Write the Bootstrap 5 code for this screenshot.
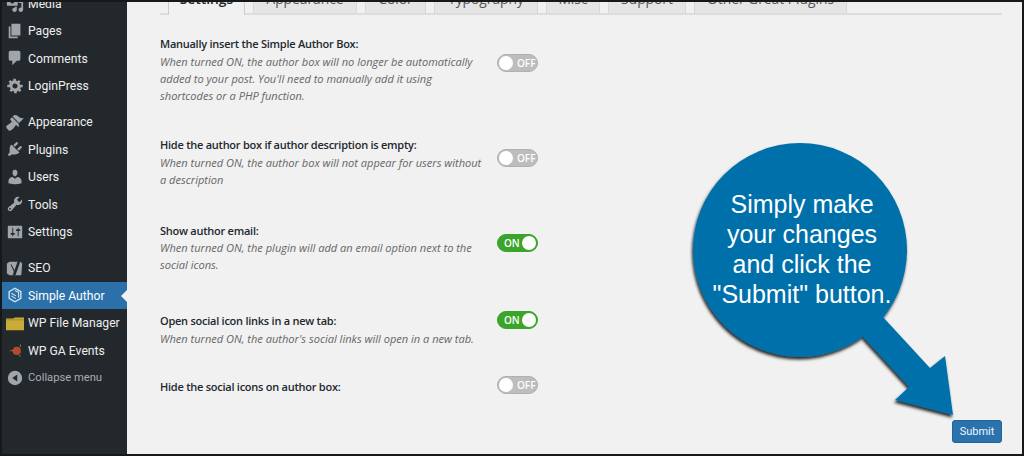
<!doctype html>
<html lang="en"><head><meta charset="utf-8"><title>Simple Author Box settings</title>
<link href="https://cdn.jsdelivr.net/npm/bootstrap@5.3.0/dist/css/bootstrap.min.css" rel="stylesheet">
<style>
html,body{height:456px;overflow:hidden;background:#111}
.frame{position:relative;width:1024px;height:456px;border:2px solid #17181a;overflow:hidden;background:#f1f1f1;font-family:"Open Sans",sans-serif;font-size:13px}
.side{width:125px;background:#23282d;flex:none;font-family:Roboto,sans-serif}
.menu{margin-top:-12.2px}
.menu li{height:27.4px;display:flex;align-items:center;color:#eee;font-size:12.2px;position:relative;white-space:nowrap}
.menu li span{padding-top:1px}
.menu li svg{width:18px;height:18px;margin:0 4px;flex:none;fill:#a0a5aa}
.menu .gap{margin-top:9px}
.menu .cur{background:#2b70a8;color:#fff}
.menu .cur::after{content:"";position:absolute;right:0;top:8px;border:6px solid transparent;border-right-color:#f1f1f1;border-left:0}
.menu .dim{color:#a9adb1;font-size:11.2px}
.pane{padding:0 20px 11px 33px;min-width:0}
.tabs{margin-top:-14px;padding-left:8px;gap:8px;border-bottom:2px solid #ddd;flex-wrap:nowrap;height:27px}
.tabs .nav-link{background:#e5e5e5;border:1px solid #d9d9d9;border-bottom:0;border-radius:0;color:#555;font-size:13.8px;line-height:20px;padding:0;height:25px;text-align:center;flex:none}
.tabs .nav-link.active{background:#f1f1f1;color:#23282d;font-weight:600;border-color:#ccc;height:27px}
.w1{width:77px}.w2{width:104px}.w3{width:61px}.w4{width:104px}.w5{width:54px}.w6{width:78px}.w7{width:153px}
.opts{margin-top:20px}
.opt{width:378px}
.opt h6{font-family:inherit;font-size:11px;font-weight:600;letter-spacing:-.25px;line-height:17.5px;color:#23282d;margin:0}
.opt p{font-size:11.05px;line-height:17px;font-style:italic;color:#666;margin:0;width:326px}
.copy{width:337px;flex:none}
.o1{margin-bottom:32.5px}.o2{margin-bottom:34px}.o3{margin-bottom:39px}.o4{margin-bottom:31.5px}
.sw{width:41px;height:18px;border-radius:9px;background:#bdbdbd;border:1px solid #b0b0b0;position:relative;color:#fff;font-size:10px;font-weight:600;line-height:16px;padding-left:19px;flex:none}
.sw::before{content:"";position:absolute;left:1px;top:1px;width:14px;height:14px;border-radius:50%;background:#fff}
.sw.on{background:#3aa52a;border-color:#38a528;padding-left:6px}
.sw.on::before{left:auto;right:1px}
.o1 .sw{margin-top:19px}.o2 .sw{margin-top:13px}.o3 .sw{margin-top:12px}.o4 .sw{margin-top:-1px}.o5 .sw{margin-top:-2px}
.go{background:#2b73ae;border:1px solid #22639a;color:#f1f6fa;font-family:Roboto,sans-serif;font-size:11px;border-radius:3px;padding:0;width:50px;height:23px;line-height:20px}
.call{position:absolute;left:-2px;top:-2px;width:1024px;height:456px;pointer-events:none}
.calltxt{position:absolute;left:700px;top:189px;width:204px;text-align:center;font:25px/30px "Liberation Sans",sans-serif;color:#fff;white-space:nowrap}
</style></head><body>
<div class="frame d-flex">
 <aside class="side">
  <ul class="menu list-unstyled mb-0">
   <li><svg viewBox="0 0 20 20"><path d="M13 11V4c0-.55-.45-1-1-1h-1.670L9 1H5L3.670 3H2c-.55 0-1 .45-1 1v7c0 .55.45 1 1 1h10c.55 0 1-.45 1-1zM7 4.500c1.380 0 2.500 1.120 2.500 2.500S8.380 9.500 7 9.500 4.500 8.380 4.500 7 5.620 4.500 7 4.500zM14 6h5v10.500c0 1.380-1.120 2.500-2.500 2.500S14 17.880 14 16.500s1.120-2.500 2.500-2.500c.17 0 .34.020.5.050V9h-3V6zm-4 8.050V13h2v3.500c0 1.380-1.120 2.500-2.500 2.500S7 17.880 7 16.500 8.120 14 9.500 14c.17 0 .34.020.5.050z"/></svg><span>Media</span></li>
   <li><svg viewBox="0 0 20 20"><path d="M6 15V2h10v13H6zm-1 1h8v2H3V5h2v11z"/></svg><span>Pages</span></li>
   <li><svg viewBox="0 0 20 20"><path d="M5 2h9c1.100 0 2 .9 2 2v7c0 1.100-.9 2-2 2h-2l-5 5v-5H5c-1.100 0-2-.9-2-2V4c0-1.100.9-2 2-2z"/></svg><span>Comments</span></li>
   <li><svg viewBox="0 0 18 21"><path d="M18 12h-2.180c-.17.7-.44 1.350-.81 1.930l1.540 1.540-2.100 2.100-1.540-1.540c-.58.360-1.230.640-1.910.810V19H8v-2.180c-.68-.170-1.330-.450-1.910-.810l-1.540 1.540-2.120-2.120 1.540-1.540c-.360-.580-.640-1.230-.810-1.890H0V9h2.180c.170-.7.450-1.330.810-1.910L1.450 5.550l2.120-2.120 1.540 1.540c.580-.360 1.230-.640 1.910-.810V2h3v2.180c.680.170 1.330.450 1.910.810l1.540-1.540 2.100 2.100-1.540 1.540c.360.580.640 1.230.810 1.910H18v3zm-9 1.500c1.660 0 3-1.340 3-3s-1.340-3-3-3-3 1.340-3 3 1.340 3 3 3z"/></svg><span>LoginPress</span></li>
   <li class="gap"><svg viewBox="0 0 20 20"><path d="M14.480 11.060L7.410 3.990l1.500-1.500c.5-.56 2.300-.47 3.510.32 1.210.8 1.430 1.280 2.910 2.100 1.180.64 2.450 1.260 4.450.85zm-.71.71L6.700 4.700 4.930 6.470c-.39.39-.39 1.020 0 1.410l1.060 1.060c.39.39.39 1.030 0 1.420-.6.6-1.430 1.110-2.210 1.690-.35.26-.7.53-1.010.84C1.430 13.230.25 14.920.25 15.500c0 1.360 2.880 4.250 4.250 4.250.58 0 2.270-1.180 3.640-2.530.31-.31.58-.65.84-1.010.58-.77 1.090-1.600 1.690-2.210.39-.39 1.030-.39 1.420 0l1.060 1.060c.39.39 1.020.39 1.410 0z"/></svg><span>Appearance</span></li>
   <li><svg viewBox="0 0 20 20"><path d="M13.110 4.360L9.870 7.600 8 5.730l3.240-3.240c.35-.34 1.050-.2 1.560.32.52.51.66 1.210.31 1.550zm-8 1.770l.91-1.120 9.010 9.010-1.190.84c-.71.71-2.630 1.160-3.820 1.160H6.140L4.900 17.260c-.59.59-1.540.59-2.120 0-.59-.58-.59-1.530 0-2.120l1.240-1.240v-3.880c0-1.130.4-3.190 1.090-3.890zm7.260 3.970l3.240-3.240c.34-.35 1.040-.21 1.550.31.52.51.66 1.210.31 1.550l-3.240 3.250z"/></svg><span>Plugins</span></li>
   <li><svg viewBox="0 0 20 20"><path d="M10 9.250c-2.270 0-2.730-3.440-2.730-3.440C7 4.020 7.820 2 9.970 2c2.160 0 2.980 2.020 2.710 3.810 0 0-.41 3.440-2.680 3.440zm0 2.570L12.720 10c2.390 0 4.520 2.330 4.520 4.530v2.490s-3.650 1.130-7.240 1.130c-3.650 0-7.240-1.130-7.240-1.130v-2.490c0-2.250 1.940-4.480 4.470-4.480z"/></svg><span>Users</span></li>
   <li><svg viewBox="0 0 20 20"><path d="M16.680 9.770c-1.340 1.340-3.300 1.670-4.950.99l-5.410 6.520c-.99.99-2.590.99-3.580 0s-.99-2.590 0-3.570l6.520-5.420c-.68-1.650-.35-3.610.99-4.950 1.280-1.280 3.120-1.620 4.720-1.060l-2.890 2.890 2.820 2.820 2.860-2.870c.53 1.580.18 3.390-1.080 4.650zM3.810 16.210c.4.39 1.040.39 1.430 0 .4-.4.4-1.040 0-1.430-.39-.4-1.030-.4-1.430 0-.39.39-.39 1.030 0 1.430z"/></svg><span>Tools</span></li>
   <li><svg viewBox="0 0 20 20"><path d="M18 16V4c0-.55-.45-1-1-1H3c-.55 0-1 .45-1 1v12c0 .55.45 1 1 1h14c.55 0 1-.45 1-1zM8 11h1c.55 0 1 .45 1 1s-.45 1-1 1H8v1.500c0 .28-.22.5-.5.5s-.5-.22-.5-.5V13H6c-.55 0-1-.45-1-1s.45-1 1-1h1V5.500c0-.28.22-.5.5-.5s.5.22.5.5V11zm5-2h-1c-.55 0-1-.45-1-1s.45-1 1-1h1V5.500c0-.28.22-.5.5-.5s.5.22.5.5V7h1c.55 0 1 .45 1 1s-.45 1-1 1h-1v5.500c0 .28-.22.5-.5.5s-.5-.22-.5-.5V9z"/></svg><span>Settings</span></li>
   <li class="gap"><svg viewBox="0 0 20 20"><path d="M4 3h10l2 0 2 2-1 13H4l-3-2V5z"/><path d="M6 6l3.500 6.500L13 2.500h3l-5.500 15.500H7.500l1.200-4L5 6z" fill="#23282d"/></svg><span>SEO</span></li>
   <li class="cur"><svg viewBox="0 0 20 20"><path fill="none" stroke="#d7e5f0" stroke-width="1.500" d="M10 2.500l6.500 3.700v7.600L10 17.500l-6.500-3.700V6.200z"/><path fill="none" stroke="#d7e5f0" stroke-width="1.200" d="M6 8l5 3M6 11l5 3M10 5l4 2v6"/></svg><span>Simple Author</span></li>
   <li><svg viewBox="0 0 20 20"><path fill="#c9ab3a" d="M0 5h8l2-1h10v14H0z"/><path fill="#a28a2a" d="M0 6h20v1H0z"/></svg><span>WP File Manager</span></li>
   <li><svg viewBox="0 0 20 20"><circle cx="12" cy="11" r="4.500" fill="#b5492c"/><path fill="#4e9a5b" d="M15 6l1-3 1 3z"/><path fill="#c97a3a" d="M3 11l5-1v1.500z"/><path fill="#4d7fa6" d="M15 15l2 3-3-2z"/></svg><span>WP GA Events</span></li>
   <li class="dim"><svg viewBox="0 0 20 20"><circle cx="10" cy="10" r="8"/><path fill="#23282d" d="M12.500 6v8L7 10z"/></svg><span>Collapse menu</span></li>
  </ul>
 </aside>
 <main class="pane flex-grow-1 d-flex flex-column">
  <ul class="nav nav-tabs tabs">
   <li class="nav-item"><a class="nav-link active w1" href="#">Settings</a></li>
   <li class="nav-item"><a class="nav-link w2" href="#">Appearance</a></li>
   <li class="nav-item"><a class="nav-link w3" href="#">Color</a></li>
   <li class="nav-item"><a class="nav-link w4" href="#">Typography</a></li>
   <li class="nav-item"><a class="nav-link w5" href="#">Misc</a></li>
   <li class="nav-item"><a class="nav-link w6" href="#">Support</a></li>
   <li class="nav-item"><a class="nav-link w7" href="#">Other Great Plugins</a></li>
  </ul>
  <div class="opts">
   <div class="opt o1 d-flex"><div class="copy"><h6>Manually insert the Simple Author Box:</h6><p>When turned ON, the author box will no longer be automatically added to your post. You'll need to manually add it using shortcodes or a PHP function.</p></div><div class="sw">OFF</div></div>
   <div class="opt o2 d-flex"><div class="copy"><h6>Hide the author box if author description is empty:</h6><p>When turned ON, the author box will not appear for users without a description</p></div><div class="sw">OFF</div></div>
   <div class="opt o3 d-flex"><div class="copy"><h6>Show author email:</h6><p>When turned ON, the plugin will add an email option next to the social icons.</p></div><div class="sw on">ON</div></div>
   <div class="opt o4 d-flex"><div class="copy"><h6>Open social icon links in a new tab:</h6><p>When turned ON, the author's social links will open in a new tab.</p></div><div class="sw on">ON</div></div>
   <div class="opt o5 d-flex"><div class="copy"><h6>Hide the social icons on author box:</h6></div><div class="sw">OFF</div></div>
  </div>
  <div class="mt-auto d-flex justify-content-end"><button class="btn go" type="button">Submit</button></div>
 </main>
 <div class="call">
  <svg width="1024" height="456" viewBox="0 0 1024 456"><defs><filter id="sh" x="-10%" y="-10%" width="120%" height="120%"><feDropShadow dx="-1" dy="2.500" stdDeviation="1.800" flood-color="#000" flood-opacity=".85"/></filter></defs>
   <g filter="url(#sh)" fill="#0170ab"><circle cx="800" cy="250" r="107"/><polygon points="883,317 930,368 945,356 953,415 895,400 909,387 863,337"/></g></svg>
  <div class="calltxt">Simply make<br>your changes<br>and click the<br>"Submit" button.</div>
 </div>
</div>
</body></html>
